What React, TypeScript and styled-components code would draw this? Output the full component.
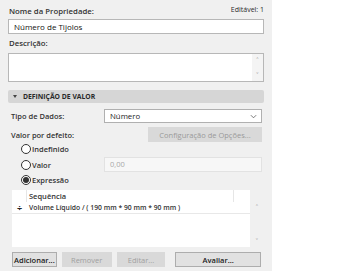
import React from 'react';
import styled, { createGlobalStyle } from 'styled-components';

const GlobalStyle = createGlobalStyle`
  html, body {
    margin: 0;
    padding: 0;
    background: #ffffff;
  }
  body {
    font-family: "Open Sans", "Noto Sans", sans-serif;
    font-size: 7.5px;
    color: #222;
  }
`;

export default function App() {
  return (
    <>
      <GlobalStyle />
      <Panel>
        <TopRow>
          <Label>Nome da Propriedade:</Label>
          <Editable>Editável: 1</Editable>
        </TopRow>
        <TextBox>Número de Tijolos</TextBox>

        <Label $top={3}>Descrição:</Label>
        <TextArea>
          <Scroller>
            <Arrow>˄</Arrow>
            <Arrow>˅</Arrow>
          </Scroller>
        </TextArea>

        <SectionHeader>
          <Caret />
          DEFINIÇÃO DE VALOR
        </SectionHeader>

        <FieldRow $top={6}>
          <RowLabel>Tipo de Dados:</RowLabel>
          <Select>
            Número
            <Chevron viewBox="0 0 8 5">
              <path d="M1 1 L4 4 L7 1" fill="none" stroke="#555" strokeWidth="0.9" />
            </Chevron>
          </Select>
        </FieldRow>

        <FieldRow $top={4}>
          <RowLabel>Valor por defeito:</RowLabel>
          <OptionsButton>Configuração de Opções...</OptionsButton>
        </FieldRow>

        <RadioRow>
          <Radio />
          <span>Indefinido</span>
        </RadioRow>
        <ValueRow>
          <RadioRow>
            <Radio />
            <span>Valor</span>
          </RadioRow>
          <DisabledInput>0,00</DisabledInput>
        </ValueRow>
        <RadioRow $top={1}>
          <Radio $checked />
          <span>Expressão</span>
        </RadioRow>

        <ListBox>
          <ListHead>
            <HeadCell $w={15} />
            <HeadCell $grow>Sequência</HeadCell>
            <HeadCell $w={16} $last />
          </ListHead>
          <ListBody>
            <Rows>
              <ListRow>
                <Grip>÷</Grip>
                <span>Volume Líquido / ( 190 mm * 90 mm * 90 mm )</span>
              </ListRow>
            </Rows>
            <ListScroller>
              <Arrow>˄</Arrow>
              <Arrow>˅</Arrow>
            </ListScroller>
          </ListBody>
        </ListBox>

        <ButtonRow>
          <Button $w={45}>Adicionar...</Button>
          <Button $w={50} $disabled>Remover</Button>
          <Button $w={49} $disabled>Editar...</Button>
          <Spacer />
          <Button $w={86}>Avaliar...</Button>
        </ButtonRow>
      </Panel>
    </>
  );
}

const Panel = styled.div`
  width: 272px;
  height: 271px;
  box-sizing: border-box;
  background: #f0f0f0;
  padding: 5px 8px 0 8px;
  display: flex;
  flex-direction: column;
`;

const TopRow = styled.div`
  display: flex;
  justify-content: space-between;
  align-items: flex-start;
  height: 14px;
`;

const Label = styled.div<{ $top?: number }>`
  padding-left: 1px;
  margin-top: ${(p) => p.$top ?? 0}px;
  height: 12px;
  line-height: 12px;
  font-size: 7.8px;
  font-weight: 600;
  color: #333;
`;

const Editable = styled.div`
  line-height: 10px;
  font-size: 7px;
  color: #2a2a2a;
`;

const TextBox = styled.div`
  height: 15px;
  box-sizing: border-box;
  background: #fff;
  border: 1px solid #b7b7b7;
  padding: 0 5px;
  line-height: 13px;
  font-size: 8px;
  color: #111;
`;

const TextArea = styled.div`
  margin-top: 4px;
  height: 29px;
  box-sizing: border-box;
  background: #fff;
  border: 1px solid #b7b7b7;
  display: flex;
  justify-content: flex-end;
`;

const Scroller = styled.div`
  width: 11px;
  background: #f4f4f4;
  display: flex;
  flex-direction: column;
  justify-content: space-between;
  align-items: center;
  padding: 3px 0 1px;
`;

const Arrow = styled.span`
  font-size: 8px;
  line-height: 8px;
  color: #a0a0a0;
`;

const SectionHeader = styled.div`
  margin-top: 8px;
  height: 13px;
  border-radius: 2px;
  background: #d6d6d6;
  display: flex;
  align-items: center;
  font-weight: 700;
  font-size: 6.8px;
  color: #2a2a2a;
`;

const Caret = styled.span`
  width: 0;
  height: 0;
  margin: 0 6px 0 5px;
  border-left: 2.5px solid transparent;
  border-right: 2.5px solid transparent;
  border-top: 3px solid #444;
`;

const FieldRow = styled.div<{ $top: number }>`
  margin-top: ${(p) => p.$top}px;
  display: flex;
  align-items: center;
  justify-content: space-between;
  padding-right: 2px;
`;

const RowLabel = styled.div`
  padding-left: 3px;
  font-weight: 600;
  color: #333;
`;

const Select = styled.div`
  width: 158px;
  height: 14px;
  box-sizing: border-box;
  background: #fff;
  border: 1px solid #b0b0b0;
  padding: 0 4px 0 5px;
  display: flex;
  align-items: center;
  justify-content: space-between;
  font-size: 7.8px;
`;

const Chevron = styled.svg`
  width: 7px;
  height: 5px;
`;

const OptionsButton = styled.div`
  width: 114px;
  height: 15px;
  box-sizing: border-box;
  background: #d9d9d9;
  color: #9a9a9a;
  display: flex;
  align-items: center;
  justify-content: center;
`;

const RadioRow = styled.div<{ $top?: number }>`
  margin-top: ${(p) => p.$top ?? 0}px;
  padding-left: 13px;
  height: 14px;
  display: flex;
  align-items: center;
  gap: 1px;
  font-weight: 600;
  color: #333;
`;

const Radio = styled.span<{ $checked?: boolean }>`
  width: 10px;
  height: 10px;
  box-sizing: border-box;
  border-radius: 50%;
  border: 1px solid #333;
  background: #fff;
  display: flex;
  align-items: center;
  justify-content: center;

  &::after {
    content: '';
    width: 6px;
    height: 6px;
    border-radius: 50%;
    background: ${(p) => (p.$checked ? '#333' : 'transparent')};
  }
`;

const ValueRow = styled.div`
  margin-top: 1px;
  display: flex;
  align-items: center;
  justify-content: space-between;
  padding-right: 2px;
`;

const DisabledInput = styled.div`
  width: 158px;
  height: 15px;
  box-sizing: border-box;
  background: #f7f7f7;
  border: 1px solid #e2e2e2;
  padding: 0 5px;
  line-height: 13px;
  color: #a8a8a8;
`;

const ListBox = styled.div`
  margin: 3px 0 0 4px;
  height: 57px;
  display: flex;
  flex-direction: column;
`;

const ListHead = styled.div`
  height: 12px;
  display: flex;
  margin-right: 14px;
  background: #fff;
`;

const HeadCell = styled.div<{ $w?: number; $grow?: boolean; $last?: boolean }>`
  ${(p) => (p.$w ? `width: ${p.$w}px;` : '')}
  ${(p) => (p.$grow ? 'flex: 1;' : '')}
  box-sizing: border-box;
  border-right: ${(p) => (p.$last ? 'none' : '1px solid #e6e6e6')};
  padding-left: 2px;
  line-height: 12px;
  font-weight: 600;
  color: #333;
`;

const ListBody = styled.div`
  flex: 1;
  display: flex;
`;

const Rows = styled.div`
  flex: 1;
  background: #fff;
`;

const ListRow = styled.div`
  height: 11px;
  border-bottom: 1px solid #e8e8e8;
  display: flex;
  align-items: center;
  font-size: 6.8px;
  font-weight: 600;
  color: #333;
`;

const Grip = styled.span`
  width: 17px;
  box-sizing: border-box;
  padding-left: 5px;
  font-size: 9px;
  font-weight: 700;
  color: #222;
`;

const ListScroller = styled.div`
  width: 14px;
  display: flex;
  flex-direction: column;
  justify-content: space-between;
  align-items: center;
  padding: 2px 0 1px;
`;

const ButtonRow = styled.div`
  margin-top: 5px;
  display: flex;
  gap: 5px;
  padding-left: 4px;
  padding-right: 3px;
`;

const Spacer = styled.div`
  flex: 1;
`;

const Button = styled.div<{ $w: number; $disabled?: boolean }>`
  width: ${(p) => p.$w}px;
  height: 15px;
  box-sizing: border-box;
  background: ${(p) => (p.$disabled ? '#d9d9d9' : '#e1e1e1')};
  border: 1px solid ${(p) => (p.$disabled ? '#d9d9d9' : '#adadad')};
  color: ${(p) => (p.$disabled ? '#a0a0a0' : '#1a1a1a')};
  font-weight: ${(p) => (p.$disabled ? 400 : 600)};
  display: flex;
  align-items: center;
  justify-content: center;
`;
